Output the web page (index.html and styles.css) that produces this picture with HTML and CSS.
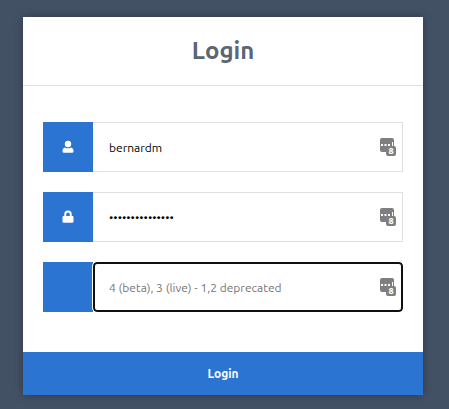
FILE: index.html
```html
<!DOCTYPE html>
<html lang="en">
<head>
<meta charset="utf-8">
<meta name="viewport" content="width=device-width, initial-scale=1">
<title>Login</title>
<link rel="stylesheet" href="styles.css">
</head>
<body>
<main class="login">
  <h1 class="title">Login</h1>
  <form class="form">
    <div class="field">
      <label class="tag" for="username" aria-label="Username">
        <svg class="icon" viewBox="0 0 12 14"><circle cx="6" cy="4" r="3.200"/><path d="M3 7.400C1.300 7.700.5 9 .5 10.800v.8c0 .8.500 1.200 1.300 1.200h8.400c.8 0 1.300-.4 1.300-1.200v-.8C11.500 9 10.700 7.700 9 7.400 7.200 8.600 4.800 8.600 3 7.400z"/></svg>
      </label>
      <input class="input" id="username" type="text" value="bernardm">
      <span class="badge">
        <svg class="keys" viewBox="0 0 14 14"><rect width="14" height="14" rx="2"/><path d="M1 6h2v2H1zM4.500 6h2v2h-2zM8 6h2v2H8zM12 4h1v4h-1z" fill="#fff"/></svg>
        <span class="count">8</span>
      </span>
    </div>
    <div class="field">
      <label class="tag" for="password" aria-label="Password">
        <svg class="icon" viewBox="0 0 12 14"><path fill-rule="evenodd" d="M2.300 6V4.300a3.700 3.700 0 0 1 7.400 0V6h.6c.8 0 1.200.5 1.200 1.200v4.400c0 .8-.4 1.200-1.200 1.200H1.700c-.8 0-1.200-.4-1.200-1.200V7.200C.5 6.500.9 6 1.700 6zM4.200 6h3.600V4.400a1.800 1.800 0 0 0-3.600 0z"/></svg>
      </label>
      <input class="input" id="password" type="password" value="abcdefghijklmno">
      <span class="badge">
        <svg class="keys" viewBox="0 0 14 14"><rect width="14" height="14" rx="2"/><path d="M1 6h2v2H1zM4.500 6h2v2h-2zM8 6h2v2H8zM12 4h1v4h-1z" fill="#fff"/></svg>
        <span class="count">8</span>
      </span>
    </div>
    <div class="field">
      <label class="tag" for="version" aria-label="Version"></label>
      <input class="input input-active" id="version" type="text" placeholder="4 (beta), 3 (live) - 1,2 deprecated">
      <span class="badge">
        <svg class="keys" viewBox="0 0 14 14"><rect width="14" height="14" rx="2"/><path d="M1 6h2v2H1zM4.500 6h2v2h-2zM8 6h2v2H8zM12 4h1v4h-1z" fill="#fff"/></svg>
        <span class="count">8</span>
      </span>
    </div>
    <button class="submit" type="submit">Login</button>
  </form>
</main>
</body>
</html>
```
FILE: styles.css
```css
* {
  box-sizing: border-box;
}

body {
  margin: 0;
  padding: 17px 26px 14px 23px;
  background: #435165;
  font-family: Ubuntu, "Noto Sans", sans-serif;
  font-size: 12px;
}

.login {
  max-width: 480px;
  margin: 0 auto;
  background: #fff;
  box-shadow: 0 0 9px rgba(0, 0, 0, 0.3);
}

.title {
  margin: 0;
  padding: 17px 20px;
  border-bottom: 1px solid #dee0e4;
  color: #5b6574;
  font-size: 24px;
  line-height: 34px;
  text-align: center;
}

.form {
  display: flex;
  flex-direction: column;
  gap: 20px;
  padding-top: 36px;
}

.field {
  position: relative;
  display: flex;
  margin: 0 20px;
}

.tag {
  display: flex;
  flex: none;
  align-items: center;
  justify-content: center;
  width: 50px;
  height: 50px;
  background: #2c74d2;
}

.icon {
  width: 12px;
  height: 14px;
  fill: #fff;
}

.input {
  flex: 1;
  min-width: 0;
  height: 50px;
  padding: 0 40px 0 16px;
  border: 1px solid #dee0e4;
  border-left: 0;
  border-radius: 0;
  background: #fff;
  color: #000;
  font: inherit;
}

.input::placeholder {
  color: #757575;
}

.input-active {
  padding-left: 14px;
  border: 2px solid #101010;
  border-radius: 4px;
  outline: 1px solid #fff;
}

.badge {
  position: absolute;
  top: 16px;
  right: 7px;
  width: 16px;
  height: 18px;
  pointer-events: none;
}

.keys {
  display: block;
  width: 14px;
  height: 14px;
  fill: #7f7f7f;
}

.count {
  position: absolute;
  right: 0;
  bottom: 0;
  width: 10px;
  border-radius: 2px;
  background: #7f7f7f;
  color: #fff;
  font-family: "Open Sans", sans-serif;
  font-size: 9px;
  font-weight: bold;
  line-height: 10px;
  text-align: center;
}

.submit {
  margin-top: 20px;
  padding: 13px;
  border: 0;
  background: #2c74d2;
  color: #fff;
  font: inherit;
  font-weight: bold;
  line-height: 17px;
  cursor: pointer;
}
```
